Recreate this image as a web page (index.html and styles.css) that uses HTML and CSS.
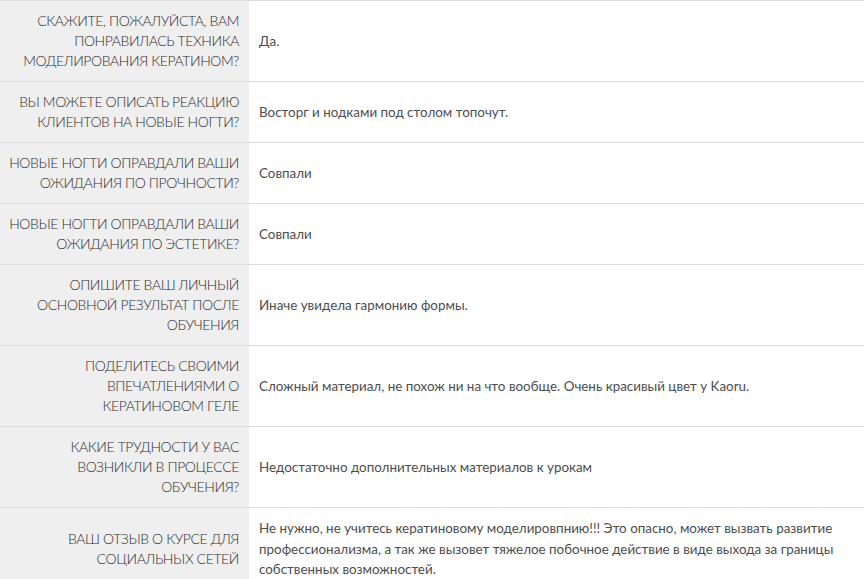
FILE: index.html
```html
<!DOCTYPE html>
<html lang="ru">
<head>
<meta charset="utf-8">
<link rel="stylesheet" href="styles.css">
</head>
<body>
<table class="qa">
  <tr><th>Скажите, пожалуйста, вам понравилась техника моделирования кератином?</th><td>Да.</td></tr>
  <tr><th>Вы можете описать реакцию клиентов на новые ногти?</th><td>Восторг и нодками под столом топочут.</td></tr>
  <tr><th>Новые ногти оправдали ваши ожидания по прочности?</th><td>Совпали</td></tr>
  <tr><th>Новые ногти оправдали ваши ожидания по эстетике?</th><td>Совпали</td></tr>
  <tr><th>Опишите ваш личный основной результат после обучения</th><td>Иначе увидела гармонию формы.</td></tr>
  <tr><th>Поделитесь своими впечатлениями о кератиновом геле</th><td>Сложный материал, не похож ни на что вообще. Очень красивый цвет у Kaoru.</td></tr>
  <tr><th>Какие трудности у вас возникли в процессе обучения?</th><td>Недостаточно дополнительных материалов к урокам</td></tr>
  <tr><th>Ваш отзыв о курсе для социальных сетей</th><td>Не нужно, не учитесь кератиновому моделировпнию!!! Это опасно, может вызвать развитие профессионализма, а так же вызовет тяжелое побочное действие в виде выхода за границы собственных возможностей.</td></tr>
</table>
</body>
</html>
```
FILE: styles.css
```css
html, body {
  margin: 0;
  padding: 0;
  background: #fff;
}
body {
  font-family: Lato, "Open Sans", sans-serif;
  color: #444;
}
.qa {
  width: 864px;
  border-collapse: collapse;
}
.qa tr {
  border-top: 1px solid #dcdcdc;
}
.qa th {
  width: 235px;
  background: #efefef;
  text-align: right;
  text-transform: uppercase;
  font-weight: 300;
  font-size: 14px;
  letter-spacing: -0.4px;
  line-height: 20px;
  padding: 10px 10px 10px 4px;
  color: #2e2e2e;
}
.qa td {
  text-align: left;
  font-size: 13.4px;
  font-weight: 400;
  line-height: 20.5px;
  padding: 10px 10px;
  color: #4d4d4d;
}
```
